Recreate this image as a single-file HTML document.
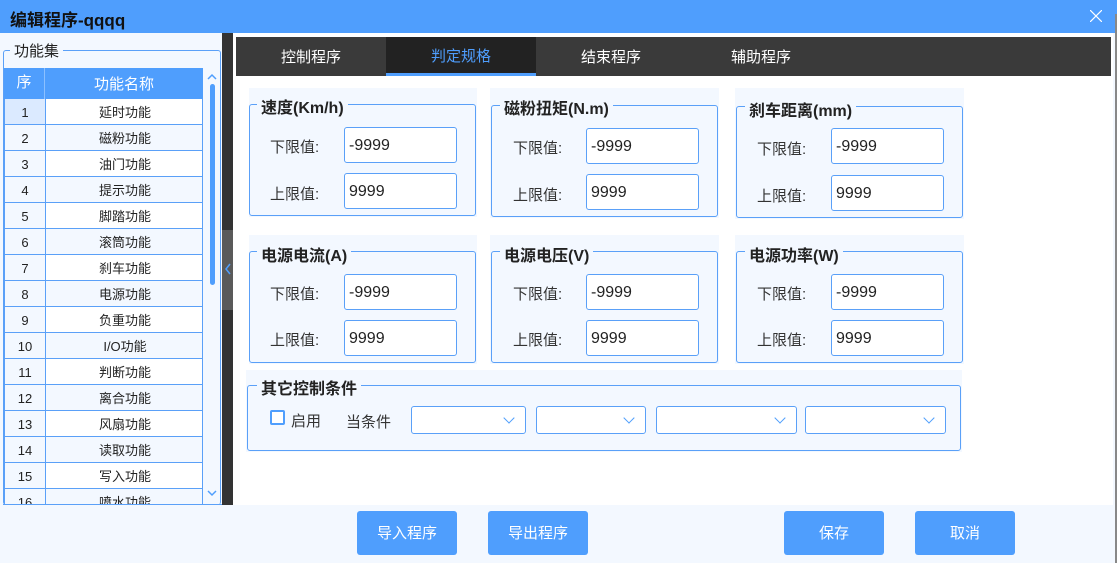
<!DOCTYPE html>
<html><head><meta charset="utf-8"><style>
*{box-sizing:border-box;margin:0;padding:0}
body{width:1117px;height:563px;overflow:hidden;background:#f3f8ff;font-family:"Liberation Sans","Noto Sans CJK SC",sans-serif;position:relative;color:#222}
.a{position:absolute}
.title{left:0;top:0;width:1117px;height:33px;background:#4f9efd}
.title span{position:absolute;left:10px;top:6px;font-size:17px;font-weight:bold;color:#111}
.fs{border:1px solid #5aa0f8;border-radius:3px}
.lg{position:absolute;background:#f3f8ff;padding:0 4px;font-size:16px;font-weight:bold;color:#222}
.row{position:absolute;left:4px;width:199px;height:26px;font-size:13px;border-bottom:1px solid #5aa0f8}
.row .s{position:absolute;left:0;width:41px;height:25px;line-height:27px;text-align:center;border-right:1px solid #5aa0f8;background:#f3f8ff}
.row .n{position:absolute;left:41px;width:158px;height:25px;line-height:27px;text-align:center}
.tab{position:absolute;top:37px;height:39px;width:150px;text-align:center;line-height:41px;color:#fff;font-size:15px}
.bg{position:absolute;background:#f3f8ff}
.lab{position:absolute;font-size:15px;color:#333}
.in{position:absolute;background:#fff;border:1px solid #5aa0f8;border-radius:3px;font-size:16px;padding-left:4px;line-height:36px;color:#222;width:113px;height:36px}
.sel{position:absolute;top:406px;height:28px;background:#fff;border:1px solid #5aa0f8;border-radius:3px}
.sel:after{content:"";position:absolute;right:12px;top:7px;width:7px;height:7px;border-right:1.5px solid #4f9efd;border-bottom:1.5px solid #4f9efd;transform:rotate(45deg)}
.btn{position:absolute;top:511px;width:100px;height:44px;background:#4f9efd;border-radius:3px;color:#fff;font-size:15px;text-align:center;line-height:46px}
</style></head><body>
<div class="a title"><span>编辑程序-qqqq</span>
<svg class="a" style="left:1090px;top:10px" width="12" height="12"><path d="M0 0L12 12M12 0L0 12" stroke="#fff" stroke-width="1.2"/></svg></div>
<div class="a" style="left:1115px;top:14px;width:2px;height:549px;background:#888"></div>
<!-- left panel -->
<div class="a" style="left:0;top:33px;width:222px;height:472px;background:#f3f8ff"></div>
<div class="a fs" style="left:3px;top:50px;width:218px;height:455px;border-bottom:none"></div>
<div class="lg" style="left:10px;top:40px;font-weight:normal;font-size:15px">功能集</div>
<div class="a" style="left:4px;top:68px;width:199px;height:31px;background:#4f9efd;color:#fff;font-size:15px">
<div class="a" style="left:0;width:41px;height:31px;border-right:1px solid #8cc0ff;text-align:center;line-height:30px;overflow:hidden">序</div>
<div class="a" style="left:41px;width:158px;height:31px;text-align:center;line-height:34px">功能名称</div></div>
<div class="a" style="left:4px;top:99px;width:199px;height:406px;overflow:hidden;background:#fff;border-left:1px solid #5aa0f8;border-right:1px solid #5aa0f8">
<div class="row" style="top:0;left:0"><div class="s" style="background:#dbeaff">1</div><div class="n">延时功能</div></div>
<div class="row" style="top:26px;left:0"><div class="s">2</div><div class="n" style="background:#f3f8ff">磁粉功能</div></div>
<div class="row" style="top:52px;left:0"><div class="s">3</div><div class="n">油门功能</div></div>
<div class="row" style="top:78px;left:0"><div class="s">4</div><div class="n" style="background:#f3f8ff">提示功能</div></div>
<div class="row" style="top:104px;left:0"><div class="s">5</div><div class="n">脚踏功能</div></div>
<div class="row" style="top:130px;left:0"><div class="s">6</div><div class="n" style="background:#f3f8ff">滚筒功能</div></div>
<div class="row" style="top:156px;left:0"><div class="s">7</div><div class="n">刹车功能</div></div>
<div class="row" style="top:182px;left:0"><div class="s">8</div><div class="n" style="background:#f3f8ff">电源功能</div></div>
<div class="row" style="top:208px;left:0"><div class="s">9</div><div class="n">负重功能</div></div>
<div class="row" style="top:234px;left:0"><div class="s">10</div><div class="n" style="background:#f3f8ff">I/O功能</div></div>
<div class="row" style="top:260px;left:0"><div class="s">11</div><div class="n">判断功能</div></div>
<div class="row" style="top:286px;left:0"><div class="s">12</div><div class="n" style="background:#f3f8ff">离合功能</div></div>
<div class="row" style="top:312px;left:0"><div class="s">13</div><div class="n">风扇功能</div></div>
<div class="row" style="top:338px;left:0"><div class="s">14</div><div class="n" style="background:#f3f8ff">读取功能</div></div>
<div class="row" style="top:364px;left:0"><div class="s">15</div><div class="n">写入功能</div></div>
<div class="row" style="top:390px;left:0"><div class="s">16</div><div class="n" style="background:#f3f8ff">喷水功能</div></div>
</div>
<div class="a" style="left:3px;top:504px;width:219px;height:1px;background:#5aa0f8"></div>
<div class="a" style="left:210px;top:84px;width:5px;height:201px;background:#4f9efd;border-radius:3px"></div>
<svg class="a" style="left:206px;top:72px" width="12" height="10"><path d="M2 7L6 3L10 7" stroke="#4f9efd" stroke-width="1.5" fill="none"/></svg>
<svg class="a" style="left:206px;top:488px" width="12" height="10"><path d="M2 3L6 7L10 3" stroke="#4f9efd" stroke-width="1.5" fill="none"/></svg>
<!-- splitter -->
<div class="a" style="left:222px;top:33px;width:11px;height:472px;background:#333"></div>
<div class="a" style="left:222px;top:230px;width:11px;height:80px;background:#5a5a5a"></div>
<svg class="a" style="left:224px;top:262px" width="8" height="14"><path d="M6 2L2 7L6 12" stroke="#4f9efd" stroke-width="1.5" fill="none"/></svg>
<!-- right -->
<div class="a" style="left:233px;top:33px;width:880px;height:472px;background:#fff"></div>
<div class="a" style="left:236px;top:37px;width:875px;height:39px;background:#3a3a3a"></div>
<div class="tab" style="left:236px">控制程序</div>
<div class="tab" style="left:386px;background:#222;color:#4f9efd;border-bottom:3px solid #4f9efd;line-height:39px">判定规格</div>
<div class="tab" style="left:536px">结束程序</div>
<div class="tab" style="left:686px">辅助程序</div>

<div class="bg" style="left:249px;top:88px;width:228px;height:129px"></div>
<div class="bg" style="left:490px;top:88px;width:229px;height:130px"></div>
<div class="bg" style="left:735px;top:88px;width:229px;height:131px"></div>
<div class="bg" style="left:249px;top:235px;width:228px;height:129px"></div>
<div class="bg" style="left:490px;top:235px;width:229px;height:129px"></div>
<div class="bg" style="left:735px;top:235px;width:229px;height:129px"></div>
<div class="bg" style="left:246px;top:370px;width:716px;height:82px"></div>

<div class="a fs" style="left:249px;top:104px;width:227px;height:112px"></div><div class="lg" style="left:257px;top:94px">速度(Km/h)</div>
<div class="a fs" style="left:491px;top:105px;width:227px;height:112px"></div><div class="lg" style="left:500px;top:95px">磁粉扭矩(N.m)</div>
<div class="a fs" style="left:736px;top:106px;width:227px;height:112px"></div><div class="lg" style="left:745px;top:97px">刹车距离(mm)</div>
<div class="a fs" style="left:249px;top:251px;width:227px;height:112px"></div><div class="lg" style="left:257px;top:242px">电源电流(A)</div>
<div class="a fs" style="left:491px;top:251px;width:227px;height:112px"></div><div class="lg" style="left:500px;top:242px">电源电压(V)</div>
<div class="a fs" style="left:736px;top:251px;width:227px;height:112px"></div><div class="lg" style="left:745px;top:242px">电源功率(W)</div>
<div class="a fs" style="left:247px;top:385px;width:714px;height:66px"></div><div class="lg" style="left:257px;top:375px">其它控制条件</div>

<div class="lab" style="left:270px;top:136px">下限值:</div><div class="in" style="left:344px;top:127px">-9999</div>
<div class="lab" style="left:270px;top:183px">上限值:</div><div class="in" style="left:344px;top:173px">9999</div>
<div class="lab" style="left:513px;top:137px">下限值:</div><div class="in" style="left:586px;top:128px">-9999</div>
<div class="lab" style="left:513px;top:184px">上限值:</div><div class="in" style="left:586px;top:174px">9999</div>
<div class="lab" style="left:757px;top:138px">下限值:</div><div class="in" style="left:831px;top:128px">-9999</div>
<div class="lab" style="left:757px;top:185px">上限值:</div><div class="in" style="left:831px;top:175px">9999</div>
<div class="lab" style="left:270px;top:283px">下限值:</div><div class="in" style="left:344px;top:274px">-9999</div>
<div class="lab" style="left:270px;top:329px">上限值:</div><div class="in" style="left:344px;top:320px">9999</div>
<div class="lab" style="left:513px;top:283px">下限值:</div><div class="in" style="left:586px;top:274px">-9999</div>
<div class="lab" style="left:513px;top:329px">上限值:</div><div class="in" style="left:586px;top:320px">9999</div>
<div class="lab" style="left:757px;top:283px">下限值:</div><div class="in" style="left:831px;top:274px">-9999</div>
<div class="lab" style="left:757px;top:329px">上限值:</div><div class="in" style="left:831px;top:320px">9999</div>

<div class="a" style="left:270px;top:410px;width:15px;height:15px;border:2px solid #4f9efd;border-radius:2px;background:#fff"></div>
<div class="lab" style="left:291px;top:410px">启用</div>
<div class="lab" style="left:346px;top:411px">当条件</div>
<div class="sel" style="left:411px;width:115px"></div>
<div class="sel" style="left:536px;width:110px"></div>
<div class="sel" style="left:656px;width:141px"></div>
<div class="sel" style="left:805px;width:141px"></div>

<div class="btn" style="left:357px">导入程序</div>
<div class="btn" style="left:488px">导出程序</div>
<div class="btn" style="left:784px">保存</div>
<div class="btn" style="left:915px">取消</div>
</body></html>
